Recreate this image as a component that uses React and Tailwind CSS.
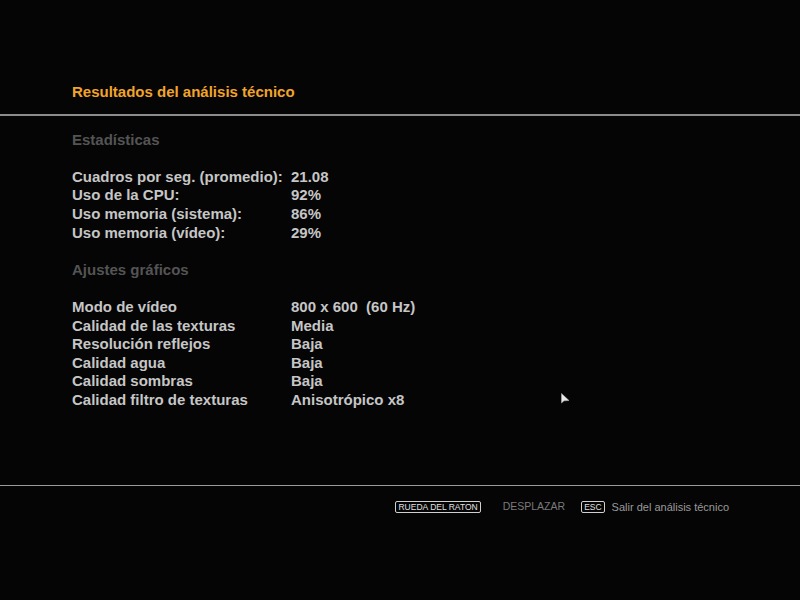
const stats = [
  ["Cuadros por seg. (promedio):", "21.08"],
  ["Uso de la CPU:", "92%"],
  ["Uso memoria (sistema):", "86%"],
  ["Uso memoria (vídeo):", "29%"],
];

const settings = [
  ["Modo de vídeo", "800 x 600  (60 Hz)"],
  ["Calidad de las texturas", "Media"],
  ["Resolución reflejos", "Baja"],
  ["Calidad agua", "Baja"],
  ["Calidad sombras", "Baja"],
  ["Calidad filtro de texturas", "Anisotrópico x8"],
];

const Row = ({ label, value }) => (
  <div className="flex h-[18.6px] items-center">
    <span className="w-[219px]">{label}</span>
    <span className="whitespace-pre">{value}</span>
  </div>
);

const Key = ({ children }) => (
  <span className="rounded-[2px] border border-[#d0d0d0] px-[2px] text-[8.5px] leading-[10px] text-[#e0e0e0]">
    {children}
  </span>
);

export default function App() {
  return (
    <div
      className="relative flex h-[600px] w-[800px] flex-col bg-[#050505]"
      style={{ fontFamily: '"Liberation Sans", Arial, sans-serif' }}
    >
      <div className="mt-[83px] flex h-[18.6px] items-center px-[72px] text-[15px] font-bold text-[#f2a42a]">
        Resultados del análisis técnico
      </div>
      <div className="mt-[12px] h-[2px] w-full bg-[#8c8c8c]" />

      <div className="mt-[15px] px-[72px] text-[15px] font-bold text-[#c6c6c6]">
        <div className="flex h-[18.6px] items-center text-[#545454]">Estadísticas</div>
        <div className="h-[18.6px]" />
        {stats.map(([l, v]) => (
          <Row key={l} label={l} value={v} />
        ))}
        <div className="h-[18.6px]" />
        <div className="flex h-[18.6px] items-center text-[#545454]">Ajustes gráficos</div>
        <div className="h-[18.6px]" />
        {settings.map(([l, v]) => (
          <Row key={l} label={l} value={v} />
        ))}
      </div>

      <div className="mt-auto mb-[87px]">
        <div className="h-px w-full bg-[#9a9a9a]" />
        <div className="mt-[15px] flex h-[12px] items-center justify-end pr-[71px] text-[10.5px]">
          <Key>RUEDA DEL RATON</Key>
          <span className="ml-[22px] text-[#7a7a7a]">DESPLAZAR</span>
          <span className="ml-[16px]">
            <Key>ESC</Key>
          </span>
          <span className="ml-[7px] text-[11px] text-[#9a9a9a]">Salir del análisis técnico</span>
        </div>
      </div>

      <svg
        className="absolute left-[561px] top-[393px]"
        width="9"
        height="13"
        viewBox="0 0 9 13"
      >
        <path d="M0.5 0.5 L0.5 10 L3 7.8 L8 7.5 Z" fill="#e8e8e8" stroke="#bbbbbb" strokeWidth="0.5" />
      </svg>
    </div>
  );
}
